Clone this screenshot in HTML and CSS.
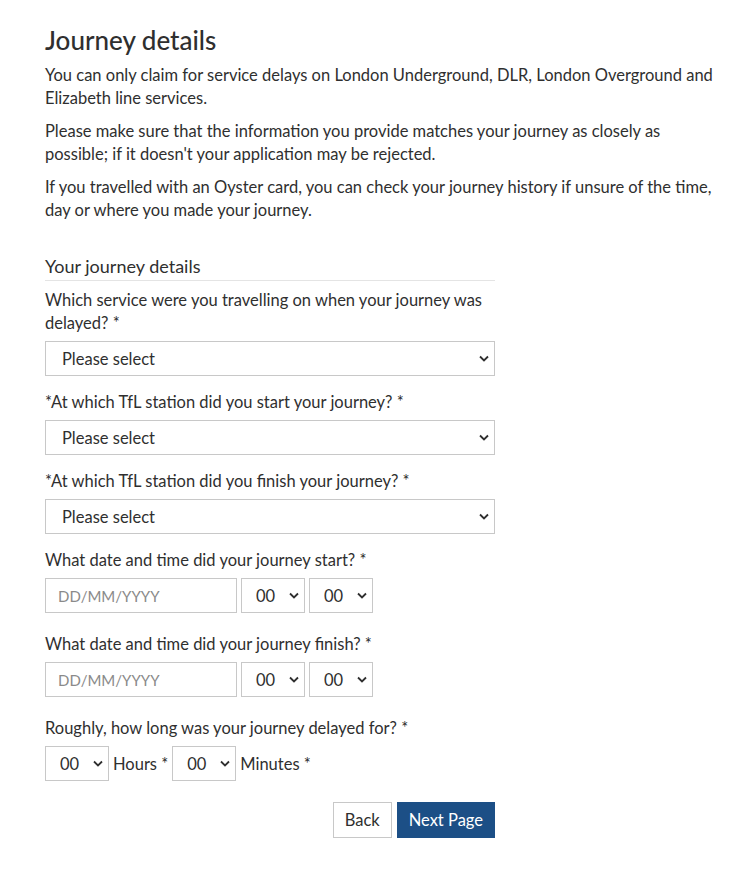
FILE: index.html
```html
<!DOCTYPE html>
<html lang="en">
<head>
    <meta charset="UTF-8">
    <meta name="viewport" content="width=device-width, initial-scale=1.0">
    <title>Journey details</title>
    <link rel="stylesheet" href="styles.css">
</head>
<body>
    <div class="container">
        <h1>Journey details</h1>
        <p>You can only claim for service delays on London Underground, DLR, London Overground and Elizabeth line services.</p>
        <p>Please make sure that the information you provide matches your journey as closely as possible; if it doesn't your application may be rejected.</p>
        <p>If you travelled with an Oyster card, you can check your journey history if unsure of the time, day or where you made your journey.</p>

        <form class="journey-form">
            <h2>Your journey details</h2>

            <!-- Линия / сервис -->
            <div class="field">
                <label>Which service were you travelling on when your journey was delayed? *</label>
                <div class="select-wrap select-wide">
                    <select><option>Please select</option></select>
                    <svg class="chevron" viewBox="0 0 10 6"><path d="M1 1l4 4 4-4"/></svg>
                </div>
            </div>

            <div class="field">
                <label>*At which TfL station did you start your journey? *</label>
                <div class="select-wrap select-wide">
                    <select><option>Please select</option></select>
                    <svg class="chevron" viewBox="0 0 10 6"><path d="M1 1l4 4 4-4"/></svg>
                </div>
            </div>

            <div class="field">
                <label>*At which TfL station did you finish your journey? *</label>
                <div class="select-wrap select-wide">
                    <select><option>Please select</option></select>
                    <svg class="chevron" viewBox="0 0 10 6"><path d="M1 1l4 4 4-4"/></svg>
                </div>
            </div>

            <!-- Дата и время -->
            <div class="field field-date">
                <label>What date and time did your journey start? *</label>
                <div class="row">
                    <input type="text" class="date-input" placeholder="DD/MM/YYYY">
                    <div class="select-wrap select-small">
                        <select><option>00</option></select>
                        <svg class="chevron" viewBox="0 0 10 6"><path d="M1 1l4 4 4-4"/></svg>
                    </div>
                    <div class="select-wrap select-small">
                        <select><option>00</option></select>
                        <svg class="chevron" viewBox="0 0 10 6"><path d="M1 1l4 4 4-4"/></svg>
                    </div>
                </div>
            </div>

            <div class="field field-date">
                <label>What date and time did your journey finish? *</label>
                <div class="row">
                    <input type="text" class="date-input" placeholder="DD/MM/YYYY">
                    <div class="select-wrap select-small">
                        <select><option>00</option></select>
                        <svg class="chevron" viewBox="0 0 10 6"><path d="M1 1l4 4 4-4"/></svg>
                    </div>
                    <div class="select-wrap select-small">
                        <select><option>00</option></select>
                        <svg class="chevron" viewBox="0 0 10 6"><path d="M1 1l4 4 4-4"/></svg>
                    </div>
                </div>
            </div>

            <!-- Длительность задержки -->
            <div class="field">
                <label>Roughly, how long was your journey delayed for? *</label>
                <div class="row">
                    <div class="select-wrap select-small">
                        <select><option>00</option></select>
                        <svg class="chevron" viewBox="0 0 10 6"><path d="M1 1l4 4 4-4"/></svg>
                    </div>
                    <span class="unit">Hours *</span>
                    <div class="select-wrap select-small">
                        <select><option>00</option></select>
                        <svg class="chevron" viewBox="0 0 10 6"><path d="M1 1l4 4 4-4"/></svg>
                    </div>
                    <span class="unit">Minutes *</span>
                </div>
            </div>

            <div class="actions">
                <button type="button" class="btn btn-back">Back</button>
                <button type="button" class="btn btn-next">Next Page</button>
            </div>
        </form>
    </div>
</body>
</html>
```

FILE: styles.css
```css
body {
    font-family: Lato, "Open Sans", Arial, sans-serif;
    color: #2f2f2f;
    background-color: #fff;
    margin: 0;
    padding: 0;
}

.container {
    padding: 24px 34px 30px 45px;
}

h1 {
    font-size: 26px;
    font-weight: 500;
    margin: 0 0 8px;
    line-height: 32px;
}

p {
    font-size: 16.5px;
    line-height: 23px;
    margin: 0 0 10px;
}

.journey-form {
    width: 450px;
    margin-top: 33px;
}

h2 {
    font-size: 18px;
    font-weight: 400;
    margin: 0 0 8px;
    padding-bottom: 3px;
    border-bottom: 1px solid #e4e4e4;
    line-height: 22px;
}

.field {
    margin-bottom: 15px;
}

.field-date {
    margin-bottom: 20px;
}

.field label {
    display: block;
    font-size: 16.5px;
    line-height: 23px;
    margin-bottom: 6px;
}

.row {
    display: flex;
    gap: 4px;
    align-items: center;
}

.unit {
    font-size: 16.5px;
}

.select-wrap {
    position: relative;
    height: 35px;
}

.select-wide {
    width: 450px;
}

.select-small {
    width: 64px;
}

.select-wrap select {
    appearance: none;
    -webkit-appearance: none;
    width: 100%;
    height: 100%;
    border: 1px solid #c8c8c8;
    border-radius: 0;
    background-color: #fff;
    font-family: inherit;
    font-size: 16.5px;
    color: #2f2f2f;
    padding: 0 0 0 16px;
    margin: 0;
}

.select-small select {
    padding-left: 14px;
}

.chevron {
    position: absolute;
    right: 6px;
    top: 14px;
    width: 10px;
    height: 7px;
    fill: none;
    stroke: #2f2f2f;
    stroke-width: 1.8;
    pointer-events: none;
}

.date-input {
    width: 192px;
    height: 35px;
    box-sizing: border-box;
    border: 1px solid #c8c8c8;
    border-radius: 0;
    font-family: inherit;
    font-size: 15px;
    padding: 0 12px;
    margin: 0;
    color: #2f2f2f;
}

.date-input::placeholder {
    color: #8a8a8a;
}

.actions {
    display: flex;
    justify-content: flex-end;
    gap: 5px;
    margin-top: 21px;
}

.btn {
    height: 36px;
    font-family: inherit;
    font-size: 16.5px;
    border-radius: 0;
    padding: 0 11px;
    cursor: pointer;
}

.btn-back {
    background-color: #fff;
    color: #2f2f2f;
    border: 1px solid #c8c8c8;
}

.btn-next {
    background-color: #1c4f86;
    color: #fff;
    border: 1px solid #1c4f86;
}
```
